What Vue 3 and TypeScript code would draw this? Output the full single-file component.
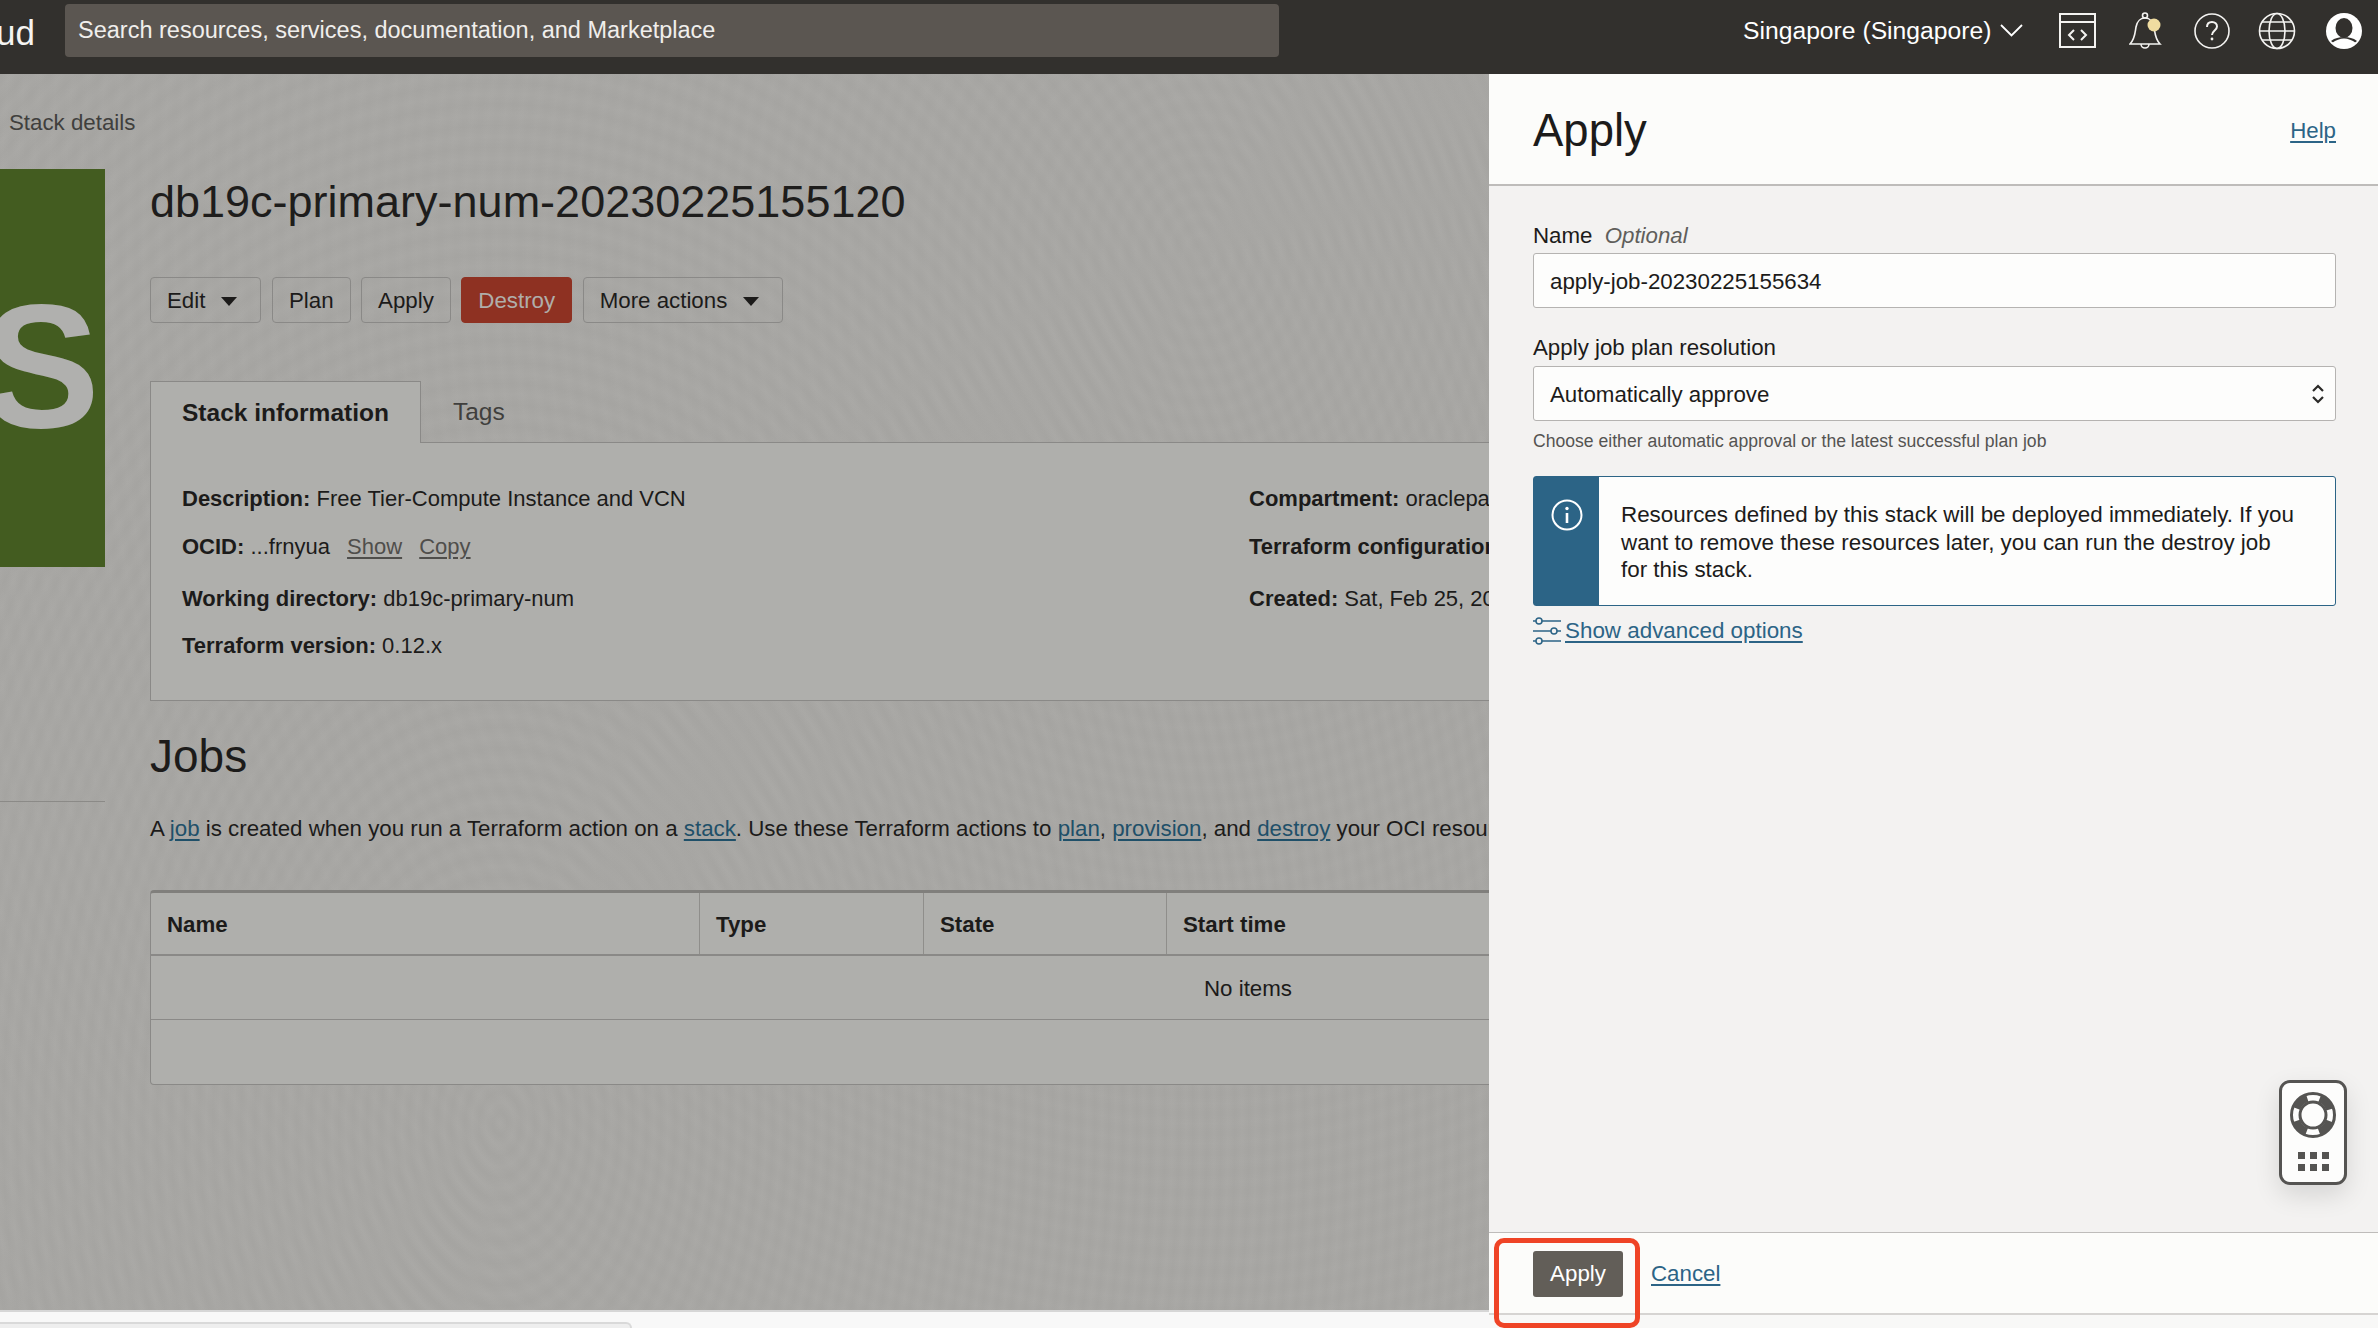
<template>
  <div class="page">
    <header class="topbar">
      <span class="brand">ud</span>
      <div class="search">Search resources, services, documentation, and Marketplace</div>
      <div class="top-actions">
        <span class="region">Singapore (Singapore)</span>
        <svg class="chevron" width="23" height="13" viewBox="0 0 23 13"><path d="M1 1l10.500 10.500L22 1" fill="none" stroke="#fff" stroke-width="1.800" /></svg>
        <svg class="ic-code" width="37" height="35" viewBox="0 0 37 35" fill="none" stroke="#f4f3f1" stroke-width="2">
          <rect x="1" y="1" width="35" height="33" />
          <path d="M1 9h35M15 17l-5 5 5 5M22 17l5 5-5 5" />
        </svg>
        <svg class="ic-bell" width="36" height="38" viewBox="0 0 36 38" fill="none" stroke="#f4f3f1" stroke-width="1.600">
          <path d="M1 32c5-5 5-11 6-17 1-6 5-9 9-9s8 3 9 9c1 6 1 12 6 17z" />
          <circle cx="16" cy="3.500" r="2.500" />
          <path d="M12 32a4 4 0 0 0 8 0" />
          <circle cx="25" cy="13" r="6.500" fill="#f0dca0" stroke="none" />
        </svg>
        <svg class="ic-help" width="36" height="36" viewBox="0 0 36 36" fill="none" stroke="#f4f3f1" stroke-width="1.600">
          <circle cx="18" cy="18" r="17" />
          <path d="M13 14c0-3 2-5 5-5s5 2 5 4.500c0 4-5 4-5 8.500" stroke-width="2" />
          <circle cx="18" cy="26" r="1.400" fill="#f4f3f1" stroke="none" />
        </svg>
        <svg class="ic-globe" width="38" height="38" viewBox="0 0 38 38" fill="none" stroke="#f4f3f1" stroke-width="1.600">
          <circle cx="19" cy="19" r="17.500" />
          <ellipse cx="19" cy="19" rx="8" ry="17.500" />
          <path d="M1.500 19h35M4 10h30M4 28h30" />
        </svg>
        <svg class="ic-user" width="36" height="36" viewBox="0 0 36 36">
          <circle cx="18" cy="18" r="18" fill="#fff" />
          <ellipse cx="18" cy="15" rx="8.500" ry="10" fill="#32302d" />
          <path d="M5 28c4-3 8-4 13-4s9 1 13 4c-3 3-8 5-13 5s-10-2-13-5z" fill="#32302d" />
          <path d="M6 30c4-3 8-4.500 12-4.500S26 27 30 30c-3 3-8 5-12 5S9 33 6 30z" fill="#fff" />
        </svg>
      </div>
    </header>

    <main class="content">
      <aside class="rail">
        <div class="crumb">Stack details</div>
        <div class="badge"><span>S</span></div>
        <div class="rail-line"></div>
      </aside>

      <div class="detail">
        <h1>db19c-primary-num-20230225155120</h1>
        <div class="actions">
          <button v-for="a in actions" :key="a.label" type="button" class="btn" :class="{ danger: a.danger, menu: a.menu }">
            <span>{{ a.label }}</span><i v-if="a.menu" class="caret"></i>
          </button>
        </div>

        <div class="tabs">
          <div class="tab active">Stack information</div>
          <div class="tab">Tags</div>
        </div>
        <section class="info">
          <div class="info-col">
            <p class="r1"><b>Description:</b> Free Tier-Compute Instance and VCN</p>
            <p class="r2"><b>OCID:</b> ...frnyua <a class="muted">Show</a> <a class="muted">Copy</a></p>
            <p class="r3"><b>Working directory:</b> db19c-primary-num</p>
            <p class="r4"><b>Terraform version:</b> 0.12.x</p>
          </div>
          <div class="info-col">
            <p class="r1"><b>Compartment:</b> oraclepartnersas (root)</p>
            <p class="r2"><b>Terraform configuration source:</b> Zip file</p>
            <p class="r3"><b>Created:</b> Sat, Feb 25, 2023, 15:51:20 UTC</p>
          </div>
        </section>

        <h2>Jobs</h2>
        <p class="lead">
          A <a>job</a> is created when you run a Terraform action on a <a>stack</a>. Use these Terraform actions to
          <a>plan</a>, <a>provision</a>, and <a>destroy</a> your OCI resources.
        </p>

        <div class="table">
          <div class="thead">
            <div v-for="c in columns" :key="c" class="th">{{ c }}</div>
          </div>
          <div class="empty">No items</div>
          <div class="tfoot"></div>
        </div>
      </div>
    </main>

    <footer class="pagebar"><div class="pagetab"></div></footer>

    <aside class="drawer">
      <div class="drawer-head">
        <h3>Apply</h3>
        <a class="link">Help</a>
      </div>

      <div class="drawer-body">
        <label class="lbl first">Name <em>Optional</em></label>
        <div class="input">apply-job-20230225155634</div>

        <label class="lbl second">Apply job plan resolution</label>
        <div class="input select">
          <span>Automatically approve</span>
          <svg width="14" height="26" viewBox="0 0 14 26" fill="none" stroke="#2b2a28" stroke-width="2.200"><path d="M2 10l5-5 5 5M2 16l5 5 5-5" /></svg>
        </div>
        <div class="hint">Choose either automatic approval or the latest successful plan job</div>

        <div class="notice">
          <div class="notice-icon">
            <svg width="32" height="32" viewBox="0 0 32 32" fill="none" stroke="#fff" stroke-width="2">
              <circle cx="16" cy="16" r="14.500" />
              <path d="M16 14v10" stroke-width="2.600" />
              <circle cx="16" cy="9.500" r="1.700" fill="#fff" stroke="none" />
            </svg>
          </div>
          <div class="notice-text">
            Resources defined by this stack will be deployed immediately. If you want to remove these resources later, you can run the destroy job for this stack.
          </div>
        </div>

        <div class="advanced">
          <svg width="29" height="28" viewBox="0 0 29 28" fill="none" stroke="#2c6486" stroke-width="1.500">
            <circle cx="6" cy="4" r="3" /><path d="M0 4h3M9 4h19" />
            <circle cx="21" cy="14" r="3" /><path d="M0 14h18M24 14h4" />
            <circle cx="6" cy="24" r="3" /><path d="M0 24h3M9 24h19" />
          </svg>
          <a class="link">Show advanced options</a>
        </div>

        <div class="helper">
          <svg width="46" height="46" viewBox="0 0 46 46" fill="none" stroke="#555452">
            <circle cx="23" cy="23" r="21.500" stroke-width="3" />
            <circle cx="23" cy="23" r="13" stroke-width="3" />
            <circle cx="23" cy="23" r="17.500" stroke-width="7" stroke-dasharray="15 12.490" stroke-dashoffset="-6.200" />
          </svg>
          <div class="dots"><i v-for="n in 6" :key="n"></i></div>
        </div>
      </div>

      <div class="drawer-foot">
        <button type="button" class="primary">Apply</button>
        <a class="link">Cancel</a>
        <div class="callout"></div>
      </div>
      <div class="drawer-strip"></div>
    </aside>
  </div>
</template>

<script setup lang="ts">
interface ActionButton {
  label: string
  menu?: boolean
  danger?: boolean
}

const actions: ActionButton[] = [
  { label: 'Edit', menu: true },
  { label: 'Plan' },
  { label: 'Apply' },
  { label: 'Destroy', danger: true },
  { label: 'More actions', menu: true },
]

const columns = ['Name', 'Type', 'State', 'Start time', 'Finish time', '']
</script>

<style scoped>
.page {
  position: relative;
  width: 2378px;
  height: 1328px;
  overflow: hidden;
  display: flex;
  flex-direction: column;
  font-family: "Liberation Sans", Arial, sans-serif;
  font-size: 22.300px;
  color: #1c1b1a;
}

.topbar {
  flex: 0 0 74px;
  display: flex;
  align-items: center;
  background: #32302d;
  color: #fff;
}
.brand {
  width: 65px;
  font-size: 35px;
  font-weight: 300;
  color: #f5f4f2;
  margin-top: -8px;
  margin-left: -4px;
  padding-right: 4px;
}
.search {
  width: 1214px;
  height: 53px;
  margin-top: -13px;
  padding-left: 13px;
  box-sizing: border-box;
  display: flex;
  align-items: center;
  background: #5b5651;
  border-radius: 4px;
  font-size: 23.500px;
  color: #f0eeec;
}
.top-actions {
  margin-left: 464px;
  display: flex;
  align-items: center;
  margin-top: -13px;
}
.region { font-size: 24.700px; }
.chevron { margin-left: 9px; }
.ic-code { margin-left: 36px; }
.ic-bell { margin-left: 33px; }
.ic-help { margin-left: 28.500px; }
.ic-globe { margin-left: 28px; }
.ic-user { margin-left: 30.500px; }

.content {
  flex: 1;
  display: flex;
  min-height: 0;
  background-color: #a8a7a4;
  background-image:
    repeating-radial-gradient(ellipse 300px 460px at 500px 1050px, rgba(255, 255, 255, 0.011) 0, rgba(0, 0, 0, 0.011) 7px, rgba(255, 255, 255, 0.011) 14px),
    repeating-radial-gradient(ellipse 340px 420px at 1200px 180px, rgba(255, 255, 255, 0.009) 0, rgba(0, 0, 0, 0.009) 8px, rgba(255, 255, 255, 0.009) 16px);
}
.rail {
  flex: 0 0 150px;
}
.crumb {
  margin-top: 37px;
  padding-left: 9px;
  color: #403f3d;
  line-height: 24px;
}
.badge {
  width: 105px;
  height: 398px;
  margin-top: 34px;
  background: #435c20;
  overflow: hidden;
  position: relative;
}
.badge span {
  position: absolute;
  right: 5px;
  top: 97px;
  font-size: 176px;
  line-height: 200px;
  font-weight: 700;
  color: #b0b0ae;
}
.rail-line {
  width: 105px;
  height: 1px;
  margin-top: 234px;
  background: #8b8a87;
}

.detail {
  width: 2196px;
  flex: none;
}
h1 {
  margin: 100px 0 0;
  font-size: 45px;
  line-height: 56px;
  font-weight: 400;
  color: #1e1d1c;
}
.actions {
  margin-top: 47px;
  display: flex;
  gap: 10.500px;
}
.btn {
  height: 46px;
  padding: 2px 16px 0;
  border: 1px solid #8a8987;
  border-radius: 4px;
  background: transparent;
  color: #1c1b1a;
  font: inherit;
  display: flex;
  align-items: center;
  gap: 16px;
}
.btn.menu { padding-right: 23px; }
.btn.danger {
  background: #8e3122;
  border-color: #8e3122;
  color: #b0aeaa;
}
.caret {
  width: 0;
  height: 0;
  border-left: 8px solid transparent;
  border-right: 8px solid transparent;
  border-top: 9px solid #1c1b1a;
}

.tabs {
  margin-top: 58px;
  display: flex;
  height: 62px;
  border-bottom: 1px solid #8a8987;
  box-sizing: border-box;
}
.tab {
  padding: 0 32px;
  display: flex;
  align-items: center;
  font-size: 24.500px;
  color: #403f3d;
}
.tab.active {
  height: 62px;
  background: #afafac;
  border: 1px solid #8a8987;
  border-bottom: none;
  box-sizing: border-box;
  font-weight: 700;
  color: #1c1b1a;
  padding: 0 31px;
}
.info {
  height: 258px;
  box-sizing: border-box;
  background: #afafac;
  border-left: 1px solid #8a8987;
  border-bottom: 1px solid #8a8987;
  padding-left: 31px;
  display: grid;
  grid-template-columns: 1067px 1fr;
  font-size: 22px;
}
.info p {
  margin: 0;
  line-height: 26px;
}
.info .r1 { margin-top: 43px; }
.info .r2 { margin-top: 22px; }
.info .r3 { margin-top: 26px; }
.info .r4 { margin-top: 21px; }
a {
  color: #1f5069;
  text-decoration: underline;
  text-underline-offset: 3px;
}
a.muted {
  color: #4f4e4b;
  margin-left: 11px;
}
h2 {
  margin: 30px 0 0;
  font-size: 46px;
  line-height: 50px;
  font-weight: 400;
}
.lead {
  margin: 34px 0 0;
  line-height: 28px;
}
.table {
  margin-top: 47px;
  background: #afafac;
  border: 1px solid #8a8987;
  border-top: 3px solid #807f7c;
  border-radius: 4px;
  box-sizing: border-box;
  height: 195px;
}
.thead {
  display: grid;
  grid-template-columns: 549px 224px 243px 400px 400px 1fr;
  height: 63px;
  border-bottom: 2px solid #8a8987;
  box-sizing: border-box;
}
.th {
  display: flex;
  align-items: center;
  padding: 2px 0 0 16px;
  font-weight: 700;
  border-right: 1px solid #8f8e8b;
}
.empty {
  height: 64px;
  box-sizing: border-box;
  padding-top: 2px;
  display: flex;
  align-items: center;
  justify-content: center;
  border-bottom: 1px solid #8a8987;
}
.pagebar {
  flex: 0 0 17px;
  background: #f8f8f8;
  border-top: 2px solid #d6d6d6;
  box-sizing: border-box;
  padding-top: 10px;
}
.pagetab {
  width: 632px;
  height: 6px;
  background: #eeeeee;
  border-top: 2px solid #d9d9d9;
  border-right: 2px solid #d9d9d9;
  border-radius: 0 6px 0 0;
  box-sizing: border-box;
}

/* drawer sits over the page content */
.drawer {
  position: absolute;
  top: 74px;
  right: 0;
  bottom: 0;
  width: 889px;
  display: flex;
  flex-direction: column;
  background: #f3f2f1;
}
.drawer-head {
  flex: 0 0 112px;
  box-sizing: border-box;
  padding: 3px 42px 0 44px;
  display: flex;
  align-items: center;
  justify-content: space-between;
  background: #fcfcfa;
  border-bottom: 2px solid #bebcba;
}
.drawer-head h3 {
  margin: 0;
  font-size: 45.500px;
  font-weight: 400;
}
.link {
  color: #2c6486;
}
.drawer-body {
  flex: 1;
  position: relative;
  padding: 36px 42px 0 44px;
}
.lbl {
  display: block;
  line-height: 26px;
}
.lbl.first {
  margin-top: 1px;
}
.lbl.first + .input {
  margin-top: 4px;
}
.lbl em {
  margin-left: 6px;
  color: #605e5b;
}
.lbl.second { margin-top: 27px; }
.input {
  margin-top: 5px;
  height: 55px;
  box-sizing: border-box;
  padding: 2px 16px 0;
  display: flex;
  align-items: center;
  justify-content: space-between;
  background: #fdfdfc;
  border: 1px solid #b5b3b1;
  border-radius: 3px;
}
.select svg { margin: -2px -6px 0 0; }
.hint {
  margin-top: 10px;
  font-size: 17.600px;
  line-height: 20px;
  color: #555452;
}
.notice {
  margin-top: 25px;
  height: 130px;
  display: flex;
  background: #fdfdfc;
  border: 1px solid #2c6486;
  border-radius: 3px;
  box-sizing: border-box;
}
.notice-icon {
  flex: 0 0 65px;
  background: #2c6486;
  display: flex;
  justify-content: center;
  padding-top: 22px;
  box-sizing: border-box;
}
.notice-text {
  padding: 24px 36px 0 22px;
  font-size: 22.400px;
  line-height: 27.500px;
}
.advanced {
  margin-top: 11px;
  display: flex;
  align-items: center;
  gap: 3px;
  font-size: 22.400px;
  color: #2c6486;
}
.advanced svg { flex: none; }
.helper {
  position: absolute;
  left: 790px;
  top: 894px;
  width: 68px;
  height: 105px;
  box-sizing: border-box;
  padding: 9px 8px 0;
  background: #fdfdfc;
  border: 3px solid #555452;
  border-radius: 11px;
  box-shadow: 0 10px 26px rgba(0, 0, 0, 0.12);
}
.helper svg { display: block; }
.dots {
  margin: 14px 0 0 8px;
  display: grid;
  grid-template-columns: repeat(3, 7px);
  gap: 5px;
}
.dots i {
  width: 7px;
  height: 7px;
  background: #555452;
}
.drawer-foot {
  position: relative;
  flex: 0 0 81px;
  box-sizing: border-box;
  padding: 1px 0 0 44px;
  display: flex;
  align-items: center;
  gap: 28px;
  background: #fcfcfa;
  border-top: 1px solid #bebcba;
}
.primary {
  width: 90px;
  height: 46px;
  border: none;
  border-radius: 3px;
  background: #625e58;
  color: #fff;
  font: inherit;
}
.callout {
  position: absolute;
  left: 5px;
  top: 5px;
  width: 146px;
  height: 90px;
  box-sizing: border-box;
  border: 5px solid #ef4426;
  border-radius: 10px;
}
.drawer-strip {
  flex: 0 0 15px;
  background: #f8f8f7;
  border-top: 2px solid #d6d4d2;
  box-sizing: border-box;
}
</style>

<style>
html,
body {
  overflow: hidden;
}
</style>
